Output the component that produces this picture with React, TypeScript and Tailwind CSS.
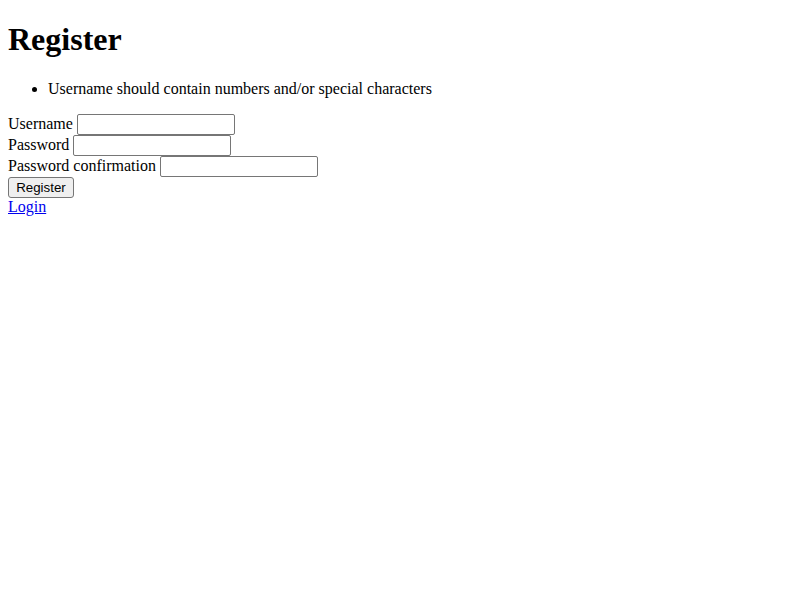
export default function App() {
  const inputCls =
    "inline-block align-baseline w-[158px] h-[21px] border border-[#767676] rounded-[2px] px-[2px] py-[1px] bg-white text-[13.333px] leading-[normal] font-['Liberation_Sans',Arial,sans-serif] text-black";
  return (
    <div className="px-2 font-['Liberation_Serif','Times_New_Roman',serif] text-[16px] leading-[normal] text-black bg-white min-h-[600px]">
      <h1 className="text-[32px] font-bold mt-[21.44px] mb-[21.44px] leading-[normal]">Register</h1>
      <ul className="list-disc pl-10 mb-4">
        <li>Username should contain numbers and/or special characters</li>
      </ul>
      <form onSubmit={(e) => e.preventDefault()}>
        <div>
          <label htmlFor="u">Username</label> <input id="u" type="text" className={inputCls} />
        </div>
        <div>
          <label htmlFor="p">Password</label> <input id="p" type="password" className={inputCls} />
        </div>
        <div>
          <label htmlFor="pc">Password confirmation</label>{" "}
          <input id="pc" type="password" className={inputCls} />
        </div>
        <div className="h-[21px]">
          <button
            type="submit"
            className="inline-flex items-center justify-center w-[66px] h-[21px] border border-[#767676] rounded-[3px] bg-[#efefef] text-[13.333px] leading-[normal] font-['Liberation_Sans',Arial,sans-serif] text-black"
          >
            Register
          </button>
        </div>
      </form>
      <a href="#" className="text-[#0000ee] underline">
        Login
      </a>
    </div>
  );
}
